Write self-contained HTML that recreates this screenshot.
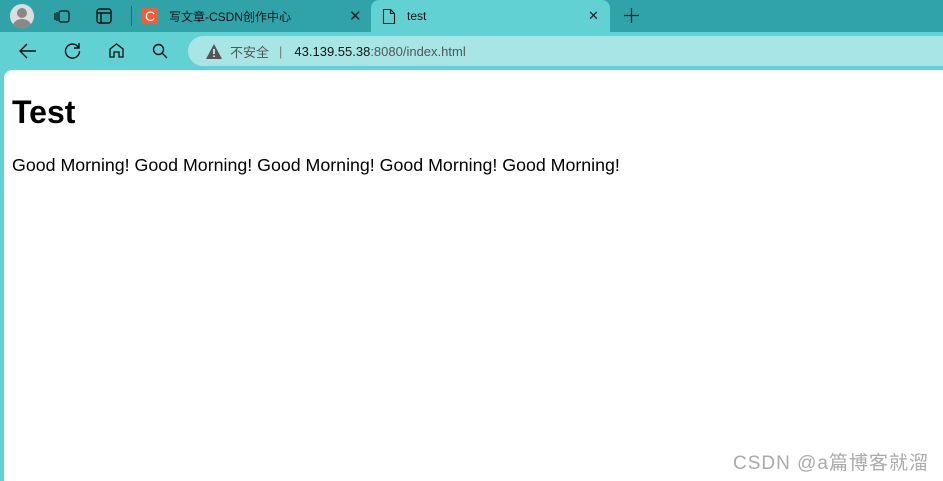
<!DOCTYPE html>
<html><head><meta charset="utf-8"><style>
*{margin:0;padding:0;box-sizing:border-box}
body{width:943px;height:481px;overflow:hidden;background:#62d1d3;font-family:"Segoe UI","Liberation Sans","Noto Sans CJK SC",sans-serif;position:relative}
.tabbar{position:absolute;left:0;top:0;width:943px;height:32px;background:#2fa3a8}
.tab{position:absolute;top:0;height:32px;font-size:12px;color:#111;display:flex;align-items:center}
.active{left:371px;width:239px;background:#62d1d3;border-radius:8px 8px 0 0}
.x{position:absolute;font-size:15px;color:#222;top:7px}
.addr{position:absolute;left:188px;top:36px;width:760px;height:30px;background:#a7e6e5;border-radius:15px 0 0 15px;font-size:13px;display:flex;align-items:center}
.content{position:absolute;left:4px;top:70px;width:939px;height:411px;background:#fff;border-radius:8px 0 0 0}
h1{position:absolute;left:8px;top:24px;font-size:32px;font-weight:bold;font-family:"Liberation Sans",sans-serif;color:#000}
p{position:absolute;left:8px;top:85px;font-size:17.8px;color:#000;font-family:"Liberation Sans",sans-serif;white-space:nowrap}
.wm{position:absolute;right:14px;bottom:6px;font-size:19px;color:#aaa;font-family:"Liberation Sans","Noto Sans CJK SC",sans-serif;letter-spacing:1px}
svg{position:absolute}
</style></head><body>
<div class="tabbar">
<div style="position:absolute;left:10px;top:4px;width:24px;height:24px;border-radius:50%;background:#ddd;overflow:hidden"><div style="position:absolute;left:7px;top:4px;width:10px;height:10px;border-radius:50%;background:#888"></div><div style="position:absolute;left:3px;top:15px;width:18px;height:14px;border-radius:50%;background:#888"></div></div>
<svg style="left:53px;top:7px" width="18" height="18" viewBox="0 0 18 18" fill="none" stroke="#111" stroke-width="1.2"><rect x="6" y="4" width="10" height="11" rx="2"/><path d="M4 5v9M2 6v7"/></svg>
<svg style="left:95px;top:7px" width="18" height="18" viewBox="0 0 18 18" fill="none" stroke="#111" stroke-width="1.4"><rect x="2" y="2" width="14" height="14" rx="2.5"/><path d="M2 6h14M6 6v10"/></svg>
<div style="position:absolute;left:131px;top:6px;width:1px;height:20px;background:#1b6e71"></div>
<div class="tab" style="left:142px"><span style="display:inline-block;width:16px;height:16px;background:#f25d38;color:#fff;font-size:14px;text-align:center;line-height:16px">C</span><span style="margin-left:11px">写文章-CSDN创作中心</span></div>
<span class="x" style="left:349px">✕</span>
<div class="tab active"><svg style="left:11px;top:8px" width="14" height="17" viewBox="0 0 14 17" fill="none" stroke="#111" stroke-width="1.1"><path d="M1.5 1.5h7l4 4v10h-11z M8.5 1.5v4h4"/></svg><span style="margin-left:36px">test</span><span class="x" style="left:217px;font-size:13px;top:8px">✕</span></div>
<svg style="left:623px;top:7px" width="17" height="17" viewBox="0 0 17 17" stroke="#111" stroke-width="1.2"><path d="M8.5 1v15M1 8.5h15"/></svg>
</div>
<svg style="left:18px;top:42px" width="20" height="18" viewBox="0 0 20 18" fill="none" stroke="#111" stroke-width="1.4"><path d="M18 9H2M9 2L2 9l7 7"/></svg>
<svg style="left:63px;top:41px" width="19" height="19" viewBox="0 0 19 19" fill="none" stroke="#111" stroke-width="1.4"><path d="M15.5 6.5A7 7 0 1 0 16.5 10M16 2v5h-5"/></svg>
<svg style="left:108px;top:42px" width="17" height="17" viewBox="0 0 17 17" fill="none" stroke="#111" stroke-width="1.3"><path d="M2 7l6.5-5 6.5 5v8h-4v-5h-5v5h-4z"/></svg>
<svg style="left:152px;top:43px" width="16" height="16" viewBox="0 0 16 16" fill="none" stroke="#111" stroke-width="1.4"><circle cx="6.5" cy="6.5" r="5"/><path d="M10 10l5 5"/></svg>
<div class="addr"><svg style="position:relative;margin-left:18px" width="16" height="15" viewBox="0 0 16 15"><path d="M8 0L16 15H0z" fill="#555"/><path d="M8 5v5M8 11.5v1.5" stroke="#fff" stroke-width="1.5"/></svg><span style="margin-left:8px;color:#555">不安全</span><span style="margin-left:10px;color:#777">|</span><span style="margin-left:12px;color:#111">43.139.55.38<span style="color:#555">:8080/index.html</span></span></div>
<div class="content">
<h1>Test</h1>
<p>Good Morning! Good Morning! Good Morning! Good Morning! Good Morning!</p>
<div class="wm">CSDN @a篇博客就溜</div>
</div>
</body></html>
